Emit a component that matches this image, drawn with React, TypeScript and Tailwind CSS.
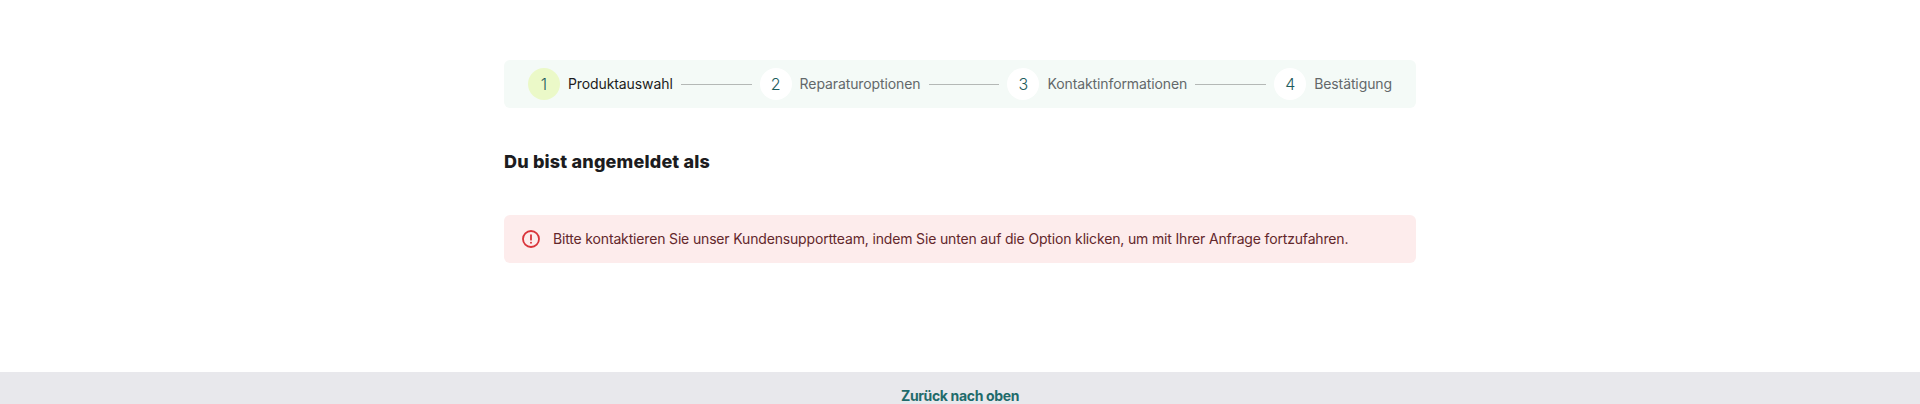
import { Fragment } from 'react';

const steps = ['Produktauswahl', 'Reparaturoptionen', 'Kontaktinformationen', 'Bestätigung'];

export default function App() {
    return (
        <div className="h-[404px] overflow-hidden bg-white font-['Inter',sans-serif]">
            <main className="mx-auto w-[912px] h-[372px] pt-[60px]">
                <div className="flex h-12 items-center rounded-md bg-[#f4faf7] pl-6 pr-6">
                    {steps.map((step, i) => (
                        <Fragment key={step}>
                            <div className="flex items-center gap-2">
                                <div className={`flex h-8 w-8 items-center justify-center rounded-full text-base font-light text-[#1d5c5c] ${i === 0 ? 'bg-[#ebf9c8]' : 'bg-white'}`}>
                                    {i + 1}
                                </div>
                                <span className={`text-sm tracking-[-0.1px] ${i === 0 ? 'text-[#1c1c20]' : 'text-[#63686a]'}`}>{step}</span>
                            </div>
                            {i < 3 && <div className="mx-2 h-px flex-1 bg-[#b4b8b6]" />}
                        </Fragment>
                    ))}
                </div>
                <h2 className="mt-[42px] text-lg leading-[24px] font-extrabold tracking-[0.01em] text-[#1c1c20]">Du bist angemeldet als</h2>
                <div className="mt-[41px] flex h-12 items-center gap-[13px] rounded-md bg-[#fdecec] px-[18px]">
                    <svg width="18" height="18" viewBox="0 0 20 20" fill="none" className="shrink-0">
                        <circle cx="10" cy="10" r="8.9" stroke="#d9343a" strokeWidth="2" />
                        <path d="M10 5.6v5.2" stroke="#d9343a" strokeWidth="2" strokeLinecap="round" />
                        <circle cx="10" cy="14.2" r="1.1" fill="#d9343a" />
                    </svg>
                    <p className="text-sm tracking-[-0.16px] text-[#63272b]">Bitte kontaktieren Sie unser Kundensupportteam, indem Sie unten auf die Option klicken, um mit Ihrer Anfrage fortzufahren.</p>
                </div>
            </main>
            <footer className="flex h-8 justify-center bg-[#e8e8ec] pt-4">
                <a className="text-sm leading-4 font-bold tracking-[-0.35px] text-[#1f6b6b]">Zurück nach oben</a>
            </footer>
        </div>
    );
}
